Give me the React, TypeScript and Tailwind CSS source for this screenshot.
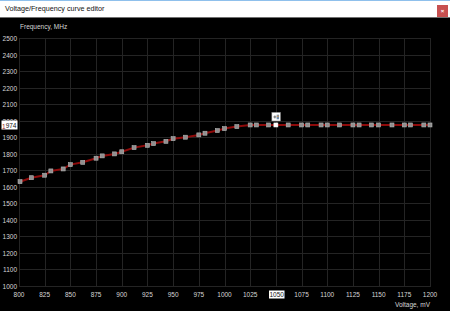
import React from 'react';

const X0 = 19;
const X1 = 430;
const Y0 = 286;
const Y1 = 38;

const xOf = (mv: number) => X0 + ((mv - 800) / 400) * (X1 - X0);
const yOf = (mhz: number) => Y0 - ((mhz - 1000) / 1500) * (Y0 - Y1);

const curve: [number, number][] = [
    [801, 1631], [812, 1655], [825, 1670], [831, 1696], [843, 1708], [850, 1734],
    [862, 1748], [875, 1773], [881, 1787], [893, 1799], [900, 1812], [912, 1837],
    [925, 1851], [931, 1861], [943, 1875], [950, 1891], [962, 1900], [975, 1914],
    [981, 1924], [993, 1940], [1000, 1952], [1012, 1964], [1025, 1974], [1031, 1974],
    [1043, 1974], [1050, 1974], [1062, 1974], [1075, 1974], [1081, 1974], [1094, 1974],
    [1100, 1974], [1112, 1974], [1125, 1974], [1131, 1974], [1143, 1974], [1150, 1974],
    [1163, 1974], [1175, 1974], [1181, 1974], [1194, 1974], [1200, 1974],
];

const volts = Array.from({ length: 17 }, (_, i) => 800 + i * 25);
const freqs = Array.from({ length: 16 }, (_, i) => 1000 + i * 100);

const label = "font-['Liberation_Sans',Arial,sans-serif] text-[6.5px]";

function CurveChart() {
    const selected = 1050;
    const current = 1974;
    const line = curve.map(([v, f]) => `${xOf(v).toFixed(1)},${yOf(f).toFixed(1)}`).join(' ');

    return (
        <svg className="block" width={450} height={293} viewBox="0 18 450 293">
            <rect x={0} y={18} width={450} height={293} fill="#000" />

            {volts.map((v) => (
                <line key={v} x1={Math.round(xOf(v)) + 0.5} x2={Math.round(xOf(v)) + 0.5} y1={Y1} y2={Y0 + 1} stroke="#242424" strokeWidth={1} />
            ))}
            {freqs.map((f) => (
                <line key={f} x1={X0} x2={X1 + 1} y1={Math.round(yOf(f)) + 0.5} y2={Math.round(yOf(f)) + 0.5} stroke="#242424" strokeWidth={1} />
            ))}

            <g fill="#d6d6d6" className={label}>
                {freqs.map((f) => (
                    <text key={f} x={17} y={yOf(f) + 0.5} textAnchor="end" dominantBaseline="central">{f}</text>
                ))}
                {volts.map((v) => (
                    <text key={v} x={xOf(v)} y={294.5} textAnchor="middle" dominantBaseline="central">{v}</text>
                ))}
                <text x={20} y={26} dominantBaseline="central">Frequency, MHz</text>
                <text x={430} y={304.5} textAnchor="end" dominantBaseline="central">Voltage, mV</text>
            </g>

            {/* highlighted axis values */}
            <rect x={1.5} y={120.5} width={16} height={9} fill="#fff" />
            <text x={16.5} y={125.5} textAnchor="end" dominantBaseline="central" fill="#111" className={label}>
                <tspan fill="#9b1c1c">1</tspan>974
            </text>
            <rect x={269} y={290.5} width={15.5} height={8} fill="#fff" />
            <text x={276.7} y={294.5} textAnchor="middle" dominantBaseline="central" fill="#111" className={label}>{selected}</text>

            <polyline points={line} fill="none" stroke="#8e0a0a" strokeWidth={2} />

            {curve.map(([v, f]) => {
                const isSel = v === selected;
                return (
                    <rect
                        key={v}
                        x={xOf(v) - 2}
                        y={yOf(f) - 2}
                        width={4}
                        height={4}
                        fill={isSel ? '#ffffff' : '#8f8f8f'}
                        stroke={isSel ? '#ffffff' : '#b4b4b4'}
                        strokeWidth={0.6}
                    />
                );
            })}

            {/* lock marker over the selected point */}
            <g transform={`translate(${xOf(selected) - 4}, ${yOf(current) - 12.5})`}>
                <rect x={0} y={0} width={8.5} height={8.5} fill="#fff" stroke="#9a9a9a" strokeWidth={0.5} />
                <line x1={1.5} x2={4.5} y1={4.5} y2={4.5} stroke="#555" strokeWidth={0.8} />
                <line x1={3} x2={3} y1={3} y2={6} stroke="#555" strokeWidth={0.8} />
                <rect x={4.8} y={2.2} width={2.4} height={4.6} fill="#6f8fb0" />
                <rect x={5.3} y={3} width={1.4} height={1.6} fill="#d89a5a" />
            </g>
        </svg>
    );
}

export default function App() {
    return (
        <div className="w-[450px] h-[311px] flex flex-col overflow-hidden bg-black">
            <div className="h-[18px] shrink-0 flex items-start justify-between bg-white border-t border-[#8fc0ec] border-b border-b-[#707070]">
                <span className="pl-[5px] pt-[3px] text-[7.2px] leading-[10px] text-[#111] font-['Liberation_Sans',Arial,sans-serif]">
                    Voltage/Frequency curve editor
                </span>
                <button className="mt-[4px] mr-[2px] w-[11px] h-[12px] bg-[#c75050] flex items-center justify-center text-white text-[6px] leading-none font-bold font-['Liberation_Sans',Arial,sans-serif]">
                    ×
                </button>
            </div>
            <CurveChart />
        </div>
    );
}
